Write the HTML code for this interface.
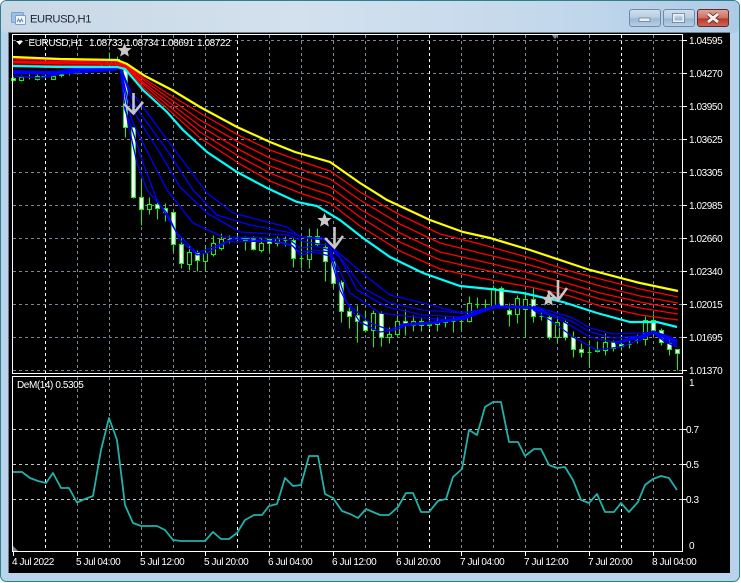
<!DOCTYPE html>
<html><head><meta charset="utf-8"><title>EURUSD,H1</title>
<style>
html,body{margin:0;padding:0;width:741px;height:583px;overflow:hidden;background:#fff}
svg{display:block}
text{font-family:"Liberation Sans",sans-serif;font-size:10px;letter-spacing:-.42px;fill:#fff}
</style></head><body>
<svg width="741" height="583" viewBox="0 0 741 583" xmlns="http://www.w3.org/2000/svg">
<defs>
<linearGradient id="tb" x1="0" y1="0" x2="1" y2="0"><stop offset="0" stop-color="#c9d8e6"/><stop offset=".4" stop-color="#d3e1ee"/><stop offset=".75" stop-color="#c3d8ec"/><stop offset="1" stop-color="#aecbe6"/></linearGradient>
<linearGradient id="btn" x1="0" y1="0" x2="0" y2="1"><stop offset="0" stop-color="#d3e0ee"/><stop offset=".5" stop-color="#b5cbe2"/><stop offset=".55" stop-color="#9bb7d4"/><stop offset="1" stop-color="#b9d0e8"/></linearGradient>
<linearGradient id="cls" x1="0" y1="0" x2="0" y2="1"><stop offset="0" stop-color="#dfa79c"/><stop offset=".5" stop-color="#cf6f60"/><stop offset=".55" stop-color="#b8392a"/><stop offset="1" stop-color="#d0685a"/></linearGradient>
<polygon id="st" points="0,-7.5 2,-2.6 7.13,-2.32 3.2,1 4.41,6.07 0,3.4 -4.41,6.07 -3.2,1 -7.13,-2.32 -2,-2.6"/>
</defs>
<rect width="741" height="583" fill="#fff"/>
<rect x="0.5" y="0.5" width="739" height="581" rx="6" fill="#b9d3ec" stroke="#2f7f8c"/>
<rect x="1" y="1" width="738" height="32" rx="5" fill="url(#tb)"/>
<rect x="8" y="32" width="722" height="541" fill="#f4f8fc"/>
<rect x="9" y="33" width="721" height="540" fill="#000"/>
<rect x="8" y="32" width="1" height="541" fill="#6c7f90"/>
<rect x="8" y="32" width="722" height="1" fill="#6c7f90"/>

<!-- title icon -->
<rect x="11.5" y="12.5" width="12" height="10" rx="1" fill="#9fc0e6" stroke="#7ba0cc"/>
<rect x="15.5" y="15.5" width="10" height="9" rx="1" fill="#f2f6fb" stroke="#7ba0cc"/>
<path d="M17 22l1.5-3 1.5 3 1.5-3 1.5 3" fill="none" stroke="#5f86b8"/>
<text x="30" y="22.5" style="font-size:11.2px;fill:#1c2530;letter-spacing:-.4px">EURUSD,H1</text>

<!-- window buttons -->
<rect x="629.5" y="9.5" width="31" height="17" rx="2.5" fill="url(#btn)" stroke="#6f8aa6"/>
<rect x="639" y="18" width="11" height="3.5" fill="#eef2f6" stroke="#5c6f84" stroke-width=".7"/>
<rect x="663.5" y="9.5" width="31" height="17" rx="2.5" fill="url(#btn)" stroke="#6f8aa6"/>
<rect x="673.5" y="14.5" width="10" height="7" fill="none" stroke="#eef2f6" stroke-width="2"/>
<rect x="672.5" y="13.5" width="12" height="9" fill="none" stroke="#5c6f84" stroke-width=".7"/>
<rect x="697.5" y="9.5" width="31" height="17" rx="2.5" fill="url(#cls)" stroke="#5e2a2a"/>
<path d="M708 14l10 8M718 14l-10 8" stroke="#4d2420" stroke-width="4.4"/>
<path d="M708 14l10 8M718 14l-10 8" stroke="#f4f0ee" stroke-width="3"/>

<!-- grid -->
<g fill="none" stroke-width="1" stroke-dasharray="3 3">
<path stroke="#778899" d="M13 40.5H683M13 73.5H683M13 106.5H683M13 139.5H683M13 172.5H683M13 205.5H683M13 238.5H683M13 271.5H683M13 304.5H683M13 337.5H683M13 370.5H683"/>
<path stroke="#778899" d="M77.5 35V373M109.5 35V373M141.5 35V373M173.5 35V373M205.5 35V373M269.5 35V373M301.5 35V373M333.5 35V373M365.5 35V373M397.5 35V373M461.5 35V373M493.5 35V373M525.5 35V373M557.5 35V373M589.5 35V373M653.5 35V373"/>
<path stroke="#fff" d="M45.5 35V373M237.5 35V373M429.5 35V373M621.5 35V373"/>
<path stroke="#778899" d="M77.5 377V552M109.5 377V552M141.5 377V552M173.5 377V552M205.5 377V552M269.5 377V552M301.5 377V552M333.5 377V552M365.5 377V552M397.5 377V552M461.5 377V552M493.5 377V552M525.5 377V552M557.5 377V552M589.5 377V552M653.5 377V552"/>
<path stroke="#fff" d="M45.5 377V552M237.5 377V552M429.5 377V552M621.5 377V552"/>
<path stroke="#c4c4c4" d="M13 429.5H683M13 464.5H683M13 499.5H683M13 551.5H683"/>
</g>

<!-- candles -->
<g transform="translate(.5 .5)" shape-rendering="crispEdges" stroke="#0f0" stroke-width="1">
<path fill="none" d="M13 75V81M21 75V81M29 74V79M37 73V80M45 71V78M53 72V79M61 71V77M69 70V75M77 67V74M85 68V73M93 66V72M101 64V70M109 52V66M117 56V66M125 66V137M133 127V198M141 178V225M149 197V214M157 200V219M165 203V221M173 212V252M181 238V268M189 245V270M197 250V271M205 245V271M213 235V256M221 233V250M229 235V243M237 234V242M245 236V250M253 236V250M261 238V252M269 238V251M277 236V246M285 236V246M293 238V267M301 240V268M309 228V268M317 228V246M325 243V281M333 261V288M341 280V322M349 305V328M357 305V342M365 310V332M373 310V347M381 311V346M389 327V343M397 315V335M405 309V335M413 315V331M421 317V331M429 320V328M437 317V331M445 316V327M453 317V332M461 316V330M469 296V322M477 297V308M485 299V311M493 285V306M501 286V308M509 303V326M517 295V323M525 291V337M533 288V322M541 308V320M549 315V339M557 315V342M565 320V340M573 331V357M581 343V357M589 340V367M597 341V352M605 333V355M613 340V351M621 338V350M629 340V348M637 334V343M645 316V345M653 314V335M661 328V345M669 340V355M677 349V370"/>
<path fill="none" d="M27 77H31M41 76H47M65 73H71M83 71H87M97 68H103M227 239H231M283 240H287M299 258H303M451 321H455M459 321H463M475 304H479M483 304H487M539 316H543M587 352H591M627 344H631M635 340H639"/>
<g fill="#000">
<rect x="19" y="77" width="4" height="3"/><rect x="35" y="76" width="4" height="3"/><rect x="51" y="76" width="4" height="3"/><rect x="75" y="70" width="4" height="3"/><rect x="107" y="59" width="4" height="5"/><rect x="115" y="59" width="4" height="5"/>
<rect x="147" y="204" width="4" height="5"/><rect x="187" y="252" width="4" height="12"/><rect x="203" y="253" width="4" height="8"/><rect x="211" y="243" width="4" height="11"/><rect x="219" y="239" width="4" height="9"/><rect x="259" y="243" width="4" height="7"/><rect x="275" y="238" width="4" height="5"/><rect x="307" y="236" width="4" height="23"/><rect x="371" y="313" width="4" height="17"/><rect x="387" y="334" width="4" height="3"/><rect x="395" y="321" width="4" height="13"/><rect x="411" y="321" width="4" height="4"/><rect x="435" y="321" width="4" height="3"/><rect x="467" y="303" width="4" height="18"/><rect x="491" y="288" width="4" height="18"/><rect x="515" y="298" width="4" height="16"/><rect x="523" y="299" width="4" height="10"/><rect x="555" y="322" width="4" height="15"/><rect x="603" y="342" width="4" height="8"/><rect x="643" y="320" width="4" height="19"/>
</g>
<g fill="#fff">
<rect x="11" y="78" width="4" height="2"/><rect x="59" y="73" width="4" height="2"/>
<rect x="123" y="64" width="4" height="63"/><rect x="131" y="127" width="4" height="70"/><rect x="139" y="197" width="4" height="12"/><rect x="155" y="204" width="4" height="4"/><rect x="163" y="208" width="4" height="4"/><rect x="171" y="212" width="4" height="32"/><rect x="179" y="244" width="4" height="19"/><rect x="195" y="252" width="4" height="8"/><rect x="243" y="238" width="4" height="2"/><rect x="251" y="238" width="4" height="11"/><rect x="267" y="239" width="4" height="4"/><rect x="291" y="240" width="4" height="18"/><rect x="315" y="236" width="4" height="8"/><rect x="323" y="247" width="4" height="14"/><rect x="331" y="261" width="4" height="22"/><rect x="339" y="282" width="4" height="29"/><rect x="347" y="311" width="4" height="5"/><rect x="355" y="315" width="4" height="6"/><rect x="363" y="321" width="4" height="9"/><rect x="379" y="313" width="4" height="24"/><rect x="403" y="321" width="4" height="4"/><rect x="419" y="321" width="4" height="4"/><rect x="427" y="324" width="4" height="1"/><rect x="443" y="320" width="4" height="2"/><rect x="499" y="288" width="4" height="18"/><rect x="507" y="310" width="4" height="4"/><rect x="531" y="299" width="4" height="17"/><rect x="547" y="317" width="4" height="20"/><rect x="563" y="322" width="4" height="15"/><rect x="571" y="337" width="4" height="12"/><rect x="579" y="349" width="4" height="3"/><rect x="595" y="350" width="4" height="1"/><rect x="611" y="342" width="4" height="6"/><rect x="619" y="344" width="4" height="2"/><rect x="651" y="320" width="4" height="10"/><rect x="659" y="330" width="4" height="12"/><rect x="667" y="343" width="4" height="6"/><rect x="675" y="349" width="4" height="4"/>
</g>
</g>

<!-- blue MAs -->
<g fill="none" stroke="#00f" stroke-width="1.3" stroke-linejoin="round">
<path stroke-width="4" d="M13 72L55 73L75 70L117 68"/>
<path stroke-width="1.5" d="M13 76L40 78L60 74L117 70"/>
<path d="M120 66L130 90L143 107L177 153L207 193L233 213L267 222L287 227L300 237L323 238L333 248L367 277L390 295L423 303L457 312L475 312L500 304"/>
<path d="M120 66L130 95L140 113L167 150L193 190L217 215L250 225L287 232L305 238L325 240L333 248L363 288L390 303L423 310L463 313L480 310L500 305"/>
<path d="M120 66L128 100L137 117L160 153L180 187L207 213L240 232L287 235L305 242L327 245L340 258L357 290L387 307L423 315L460 317L480 311L500 306"/>
<path d="M120 66L127 105L133 123L150 157L167 190L193 223L223 237L267 238L290 240L300 248L315 246L330 250L350 293L380 313L423 318L457 320L480 311L500 307"/>
<path d="M120 66L125 110L130 123L143 163L157 200L177 233L197 253L213 247L233 239L273 241L290 244L300 252L315 250L330 252L347 303L370 323L390 330L403 325L433 322L463 318L480 310L500 306"/>
<path d="M120 66L124 100L128 123L137 163L147 190L167 213L180 240L197 255L207 253L227 242L270 241L293 246L300 255L314 252L330 256L340 290L347 303L360 322L380 332L395 330L410 324L433 323L465 319L480 312L500 305"/>
<path stroke-width="3" d="M400 325L430 323L465 318L480 312L493 307L520 307L533 308L545 312"/>
<path d="M533 306L557 313L573 318L590 328L613 334L640 333L653 332L665 335L677 340"/>
<path d="M533 308L557 316L573 322L590 332L613 338L640 336L653 333L665 338L677 343"/>
<path d="M533 309L557 318L573 327L590 337L613 342L640 338L653 333L665 340L677 345"/>
<path d="M533 310L550 320L573 337L597 350L620 347L640 340L653 333L665 342L677 347"/>
<path stroke-width="3" d="M615 343L640 337L653 332L665 336L677 341"/>
</g>

<!-- red MAs -->
<g fill="none" stroke="#f00" stroke-width="1.3">
<path d="M13 59L117 61L127 65L145 79L170 95L200 113L240 136L270 150L300 161L330 171L360 192L400 215L440 234L480 244L530 258L570 271L600 279L640 289L678 297"/>
<path d="M13 61L117 62L127 66L145 81L170 99L200 120L240 143L270 158L300 169L330 179L360 200L400 224L440 243L480 253L530 265L570 277L600 286L640 296L678 303"/>
<path d="M13 62L117 63.5L127 67L145 84L170 103L200 126L240 150L270 166L300 177L330 187L360 209L400 233L440 252L480 261L530 273L570 284L600 293L640 302L678 309"/>
<path d="M13 63L117 64.5L127 68L145 86L170 107L200 132L240 157L270 173L300 185L330 195L360 217L400 242L440 260L480 269L530 280L570 290L600 299L640 308L678 314"/>
<path d="M13 65L117 66L127 69L145 89L170 111L200 138L240 164L270 181L300 193L330 203L360 226L400 251L440 269L480 278L530 287L570 296L600 306L640 315L678 320"/>
</g>
<!-- yellow & aqua -->
<path fill="none" stroke="#ff0" stroke-width="2.2" d="M13 57L60 59L117 60L127 64L145 76L172 90L200 107L237 127L270 142L295 152L330 162L360 183L387 200L430 220L463 232L490 238L530 250L590 270L640 283L678 291"/>
<path fill="none" stroke="#0ff" stroke-width="2.2" d="M13 66L60 67L117 67L125 69L143 90L167 112L183 130L207 152L237 172L267 188L297 202L317 206L340 220L363 238L390 257L423 273L460 286L490 289L523 293L563 302L597 313L630 322L657 322L677 327"/>

<!-- arrows & stars -->
<g fill="none" stroke="#c6c6c6" stroke-width="2.6">
<path d="M133.5 93V113M124 104L133.5 113.5L143 102"/>
<path d="M334.5 227V247M325 238L334.5 247.5L343 236"/>
<path d="M558 280V299M548 291L558 300.5L567 288"/>
</g>
<g fill="#c8c8c8">
<use href="#st" x="124.5" y="50.5"/>
<use href="#st" x="324.5" y="220.5"/>
<use href="#st" x="548.5" y="299.5"/>
</g>
<polygon points="551,34 559,34 555,39" fill="#8a8a8a"/>

<!-- DeM -->
<polyline fill="none" stroke="#20b2aa" stroke-width="1.8" stroke-linejoin="round" points="13,472 22,472 30,478 38,481 46,483 53,473 61,488 69,488 77,502.5 85,499 93,496 101,450 109,418 117,440 125,505 133,523 141,526 157,526 165,530 173,540 181,541 205,541 213,532 221,539 229,539 237,533 245,520 254,515 262,515 269,506 277,504 285,478 293,486 301,485 309,456 318,456 325,494 333,498 342,511 350,514 358,518 366,509 373,512 380,515 389,515 398,507 406,493 413,493 421,512 429,512 438,501 446,499 453,477 462,469 469,430 477,435 485,407 493,402 501,402 509,442 518,442 525,456 534,449 541,449 549,465 557,468 565,467 573,480 581,500 589,503 597,494 605,512 614,512 621,503 629,512 638,502 645,485 653,479 661,476 669,478 677,490"/>
<polygon points="13,546 13,552 19,552" fill="#778899"/>

<!-- frames & ticks -->
<g fill="none" stroke="#fff" stroke-width="1" shape-rendering="crispEdges">
<rect x="12.5" y="34.5" width="670" height="339"/>
<rect x="12.5" y="376.5" width="670" height="175"/>
<path d="M683 40.5H687M683 73.5H687M683 106.5H687M683 139.5H687M683 172.5H687M683 205.5H687M683 238.5H687M683 271.5H687M683 304.5H687M683 337.5H687M683 370.5H687M683 429.5H687M683 464.5H687M683 499.5H687"/>
<path d="M13.5 552V556M77.5 552V556M141.5 552V556M205.5 552V556M269.5 552V556M333.5 552V556M397.5 552V556M461.5 552V556M525.5 552V556M589.5 552V556M653.5 552V556"/>
</g>

<!-- chart texts -->
<polygon points="16,41 23,41 19.5,45" fill="#fff"/>
<text x="28.5" y="46">EURUSD,H1</text>
<text x="89" y="46">1.08733</text><text x="125" y="46">1.08734</text><text x="160.5" y="46">1.08691</text><text x="197" y="46">1.08722</text>
<text x="17" y="388">DeM(14) 0.5305</text>
<text x="689" y="44">1.04595</text><text x="689" y="77">1.04270</text><text x="689" y="110">1.03950</text><text x="689" y="143">1.03625</text><text x="689" y="176">1.03305</text><text x="689" y="209">1.02985</text><text x="689" y="242">1.02660</text><text x="689" y="275">1.02340</text><text x="689" y="308">1.02015</text><text x="689" y="341">1.01695</text><text x="689" y="374">1.01370</text>
<text x="689" y="386">1</text><text x="686" y="433">0.7</text><text x="686" y="468">0.5</text><text x="686" y="503">0.3</text><text x="689" y="549">0</text>
<text x="12" y="565">4 Jul 2022</text><text x="76" y="565">5 Jul 04:00</text><text x="140" y="565">5 Jul 12:00</text><text x="204" y="565">5 Jul 20:00</text><text x="268" y="565">6 Jul 04:00</text><text x="332" y="565">6 Jul 12:00</text><text x="396" y="565">6 Jul 20:00</text><text x="460" y="565">7 Jul 04:00</text><text x="524" y="565">7 Jul 12:00</text><text x="588" y="565">7 Jul 20:00</text><text x="652" y="565">8 Jul 04:00</text>
</svg>
</body></html>
